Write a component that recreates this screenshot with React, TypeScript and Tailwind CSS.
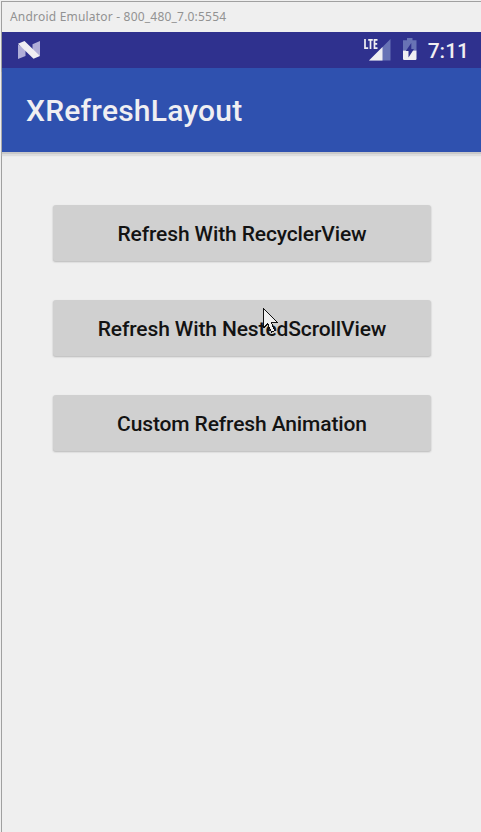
import React from 'react';

function NougatIcon() {
  return (
    <svg className="block h-[20px] w-[24px]" viewBox="0 0 24 20">
      <path d="M1 4.5 8.5 9v7L1 19Z" fill="#b0aed8" />
      <path d="M15.5 4.2 23 1v15l-7.5-4Z" fill="#b0aed8" />
      <path d="M1 3.7 7.5 1 23 16l-6.5 2.8Z" fill="#f0eff2" />
    </svg>
  );
}

function SignalIcon() {
  return (
    <svg className="block h-[24px] w-[28px]" viewBox="0 0 28 24">
      <path d="M26.5 1v21.5H5Z" fill="#6873b5" />
      <path d="M18.5 9v13.5H5Z" fill="#f0eff2" />
      <path d="M1 1v9.2h3.2M4.2 1.8h4.6M6.5 1.8v9.2M13.5 1.8h-3v8.4h3M10.5 5.9h2.7" fill="none" stroke="#f0eff2" strokeWidth="1.7" />
    </svg>
  );
}

function BatteryIcon() {
  return (
    <svg className="block h-[24px] w-[16px]" viewBox="0 0 16 24">
      <path d="M5 0h5.5v2.2h4v10.3H1V2.2h4Z" fill="#6873b5" />
      <path d="M1 12.5h13.5v8.7l-.8.8H1.8l-.8-.8Z" fill="#f0eff2" />
      <path d="M9.3 5v6H12L6.5 19.5V13H3.8Z" fill="#2f318e" />
    </svg>
  );
}

function Pointer() {
  return (
    <svg className="pointer-events-none absolute left-[263px] top-[308px] h-[27px] w-[17px]" viewBox="0 0 17 27" shapeRendering="crispEdges">
      <path d="M.5.5v19.3l4.2-4 3.7 8.4 3.5-1.6-3.7-8.1h6.1Z" fill="#efefef" stroke="#111" />
    </svg>
  );
}

function ActionButton({ children }: { children: React.ReactNode }) {
  return (
    <button className="h-[56px] w-full rounded-[3px] bg-[#d0d0d0] pt-[2px] text-center text-[21px] leading-[28px] font-medium tracking-[-0.12px] text-[#131313] shadow-[0_1px_0_#c6c6c6,0_1px_1px_1px_#dedede]">
      {children}
    </button>
  );
}

export default function App() {
  return (
    <div className="relative h-[832px] w-[481px] overflow-hidden bg-[#efefef] pl-px pt-px font-[Roboto,sans-serif]">
      <div className="flex h-[831px] flex-col border-l border-t border-[#a0a0a0]">
        <header className="flex h-[30px] shrink-0 items-center pl-2 font-['Noto_Sans',sans-serif] text-[12px] tracking-[0.2px] whitespace-nowrap text-[#929292]">
          <span>Android Emulator - 800_480_7.0:5554</span>
        </header>
        <div className="flex h-[36px] shrink-0 items-center bg-[#2f318e] pl-[15px] pr-[12px]">
          <NougatIcon />
          <div className="ml-auto flex items-center">
            <SignalIcon />
            <span className="ml-[10px]"><BatteryIcon /></span>
            <span className="ml-[10px] pt-[2px] text-[21px] leading-6 font-medium text-[#f0eff2]">7:11</span>
          </div>
        </div>
        <div className="flex h-[84px] shrink-0 items-center bg-[#2f51af] pl-6 pt-[2px] shadow-[0_2px_0_#c9c9c9,0_4px_1px_#dddddd]">
          <h1 className="text-[30px] leading-9 font-medium tracking-[0.22px] text-[#f0eff2]">XRefreshLayout</h1>
        </div>
        <main className="flex flex-col gap-[39px] pl-[51px] pr-[50px] pt-[53px]">
          <ActionButton>Refresh With RecyclerView</ActionButton>
          <ActionButton>Refresh With NestedScrollView</ActionButton>
          <ActionButton>Custom Refresh Animation</ActionButton>
        </main>
      </div>
      <Pointer />
    </div>
  );
}
